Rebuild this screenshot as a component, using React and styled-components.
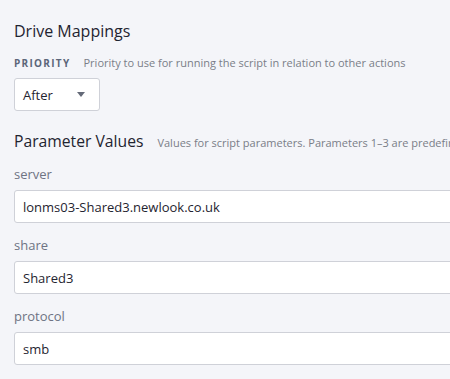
import styled, { createGlobalStyle } from "styled-components";

const GlobalStyle = createGlobalStyle`
  html, body {
    margin: 0;
    padding: 0;
    background: #f4f5f9;
    overflow: hidden;
  }
  body {
    font-family: "Open Sans", "Liberation Sans", sans-serif;
    color: #1f2430;
  }
`;

const Page = styled.div`
  width: 450px;
  height: 379px;
  padding: 0 14px;
  box-sizing: border-box;
  overflow: hidden;
`;

const Title = styled.h2`
  margin: 0;
  padding-top: 20px;
  font-size: 16px;
  font-weight: 400;
  line-height: 22px;
  color: #1f2430;
`;

const OptionRow = styled.div`
  display: flex;
  align-items: baseline;
  gap: 13px;
  margin-top: 13px;
  white-space: nowrap;
`;

const Caps = styled.span`
  font-size: 10px;
  font-weight: 700;
  letter-spacing: 1.3px;
  text-transform: uppercase;
  color: #5c6679;
`;

const Hint = styled.span`
  font-size: 11px;
  color: #7a7e88;
`;

const Select = styled.div`
  display: flex;
  align-items: center;
  justify-content: space-between;
  width: 86px;
  height: 33px;
  margin-top: 8px;
  padding: 0 14px 0 8px;
  box-sizing: border-box;
  background: #fff;
  border: 1px solid #cfd1d8;
  border-radius: 3px;
  font-size: 13px;
`;

const Caret = styled.span`
  width: 0;
  height: 0;
  border-left: 4px solid transparent;
  border-right: 4px solid transparent;
  border-top: 5px solid #646a78;
`;

const SectionHead = styled.div`
  display: flex;
  align-items: baseline;
  gap: 14px;
  margin-top: 18px;
  white-space: nowrap;
`;

const SectionTitle = styled.h2`
  margin: 0;
  font-size: 15.7px;
  font-weight: 400;
  line-height: 24px;
  color: #1f2430;
`;

const Field = styled.div`
  display: flex;
  flex-direction: column;
  gap: 8px;
  margin-top: ${p => (p.first ? "14px" : "15px")};
`;

const Label = styled.label`
  font-size: 13px;
  line-height: 15px;
  color: #6e7383;
`;

const Input = styled.div`
  width: 600px;
  height: 33px;
  padding: 0 8px;
  box-sizing: border-box;
  display: flex;
  align-items: center;
  background: #fff;
  border: 1px solid #cfd1d8;
  border-radius: 3px;
  font-size: 13px;
  color: #1f2430;
`;

const params = [
  { name: "server", value: "lonms03-Shared3.newlook.co.uk" },
  { name: "share", value: "Shared3" },
  { name: "protocol", value: "smb" },
];

export default function App() {
  return (
    <>
      <GlobalStyle />
      <Page>
        <Title>Drive Mappings</Title>
        <OptionRow>
          <Caps>Priority</Caps>
          <Hint>Priority to use for running the script in relation to other actions</Hint>
        </OptionRow>
        <Select>
          After
          <Caret />
        </Select>
        <SectionHead>
          <SectionTitle>Parameter Values</SectionTitle>
          <Hint>Values for script parameters. Parameters 1–3 are predefined</Hint>
        </SectionHead>
        {params.map((p, i) => (
          <Field key={p.name} first={i === 0}>
            <Label>{p.name}</Label>
            <Input>{p.value}</Input>
          </Field>
        ))}
      </Page>
    </>
  );
}
